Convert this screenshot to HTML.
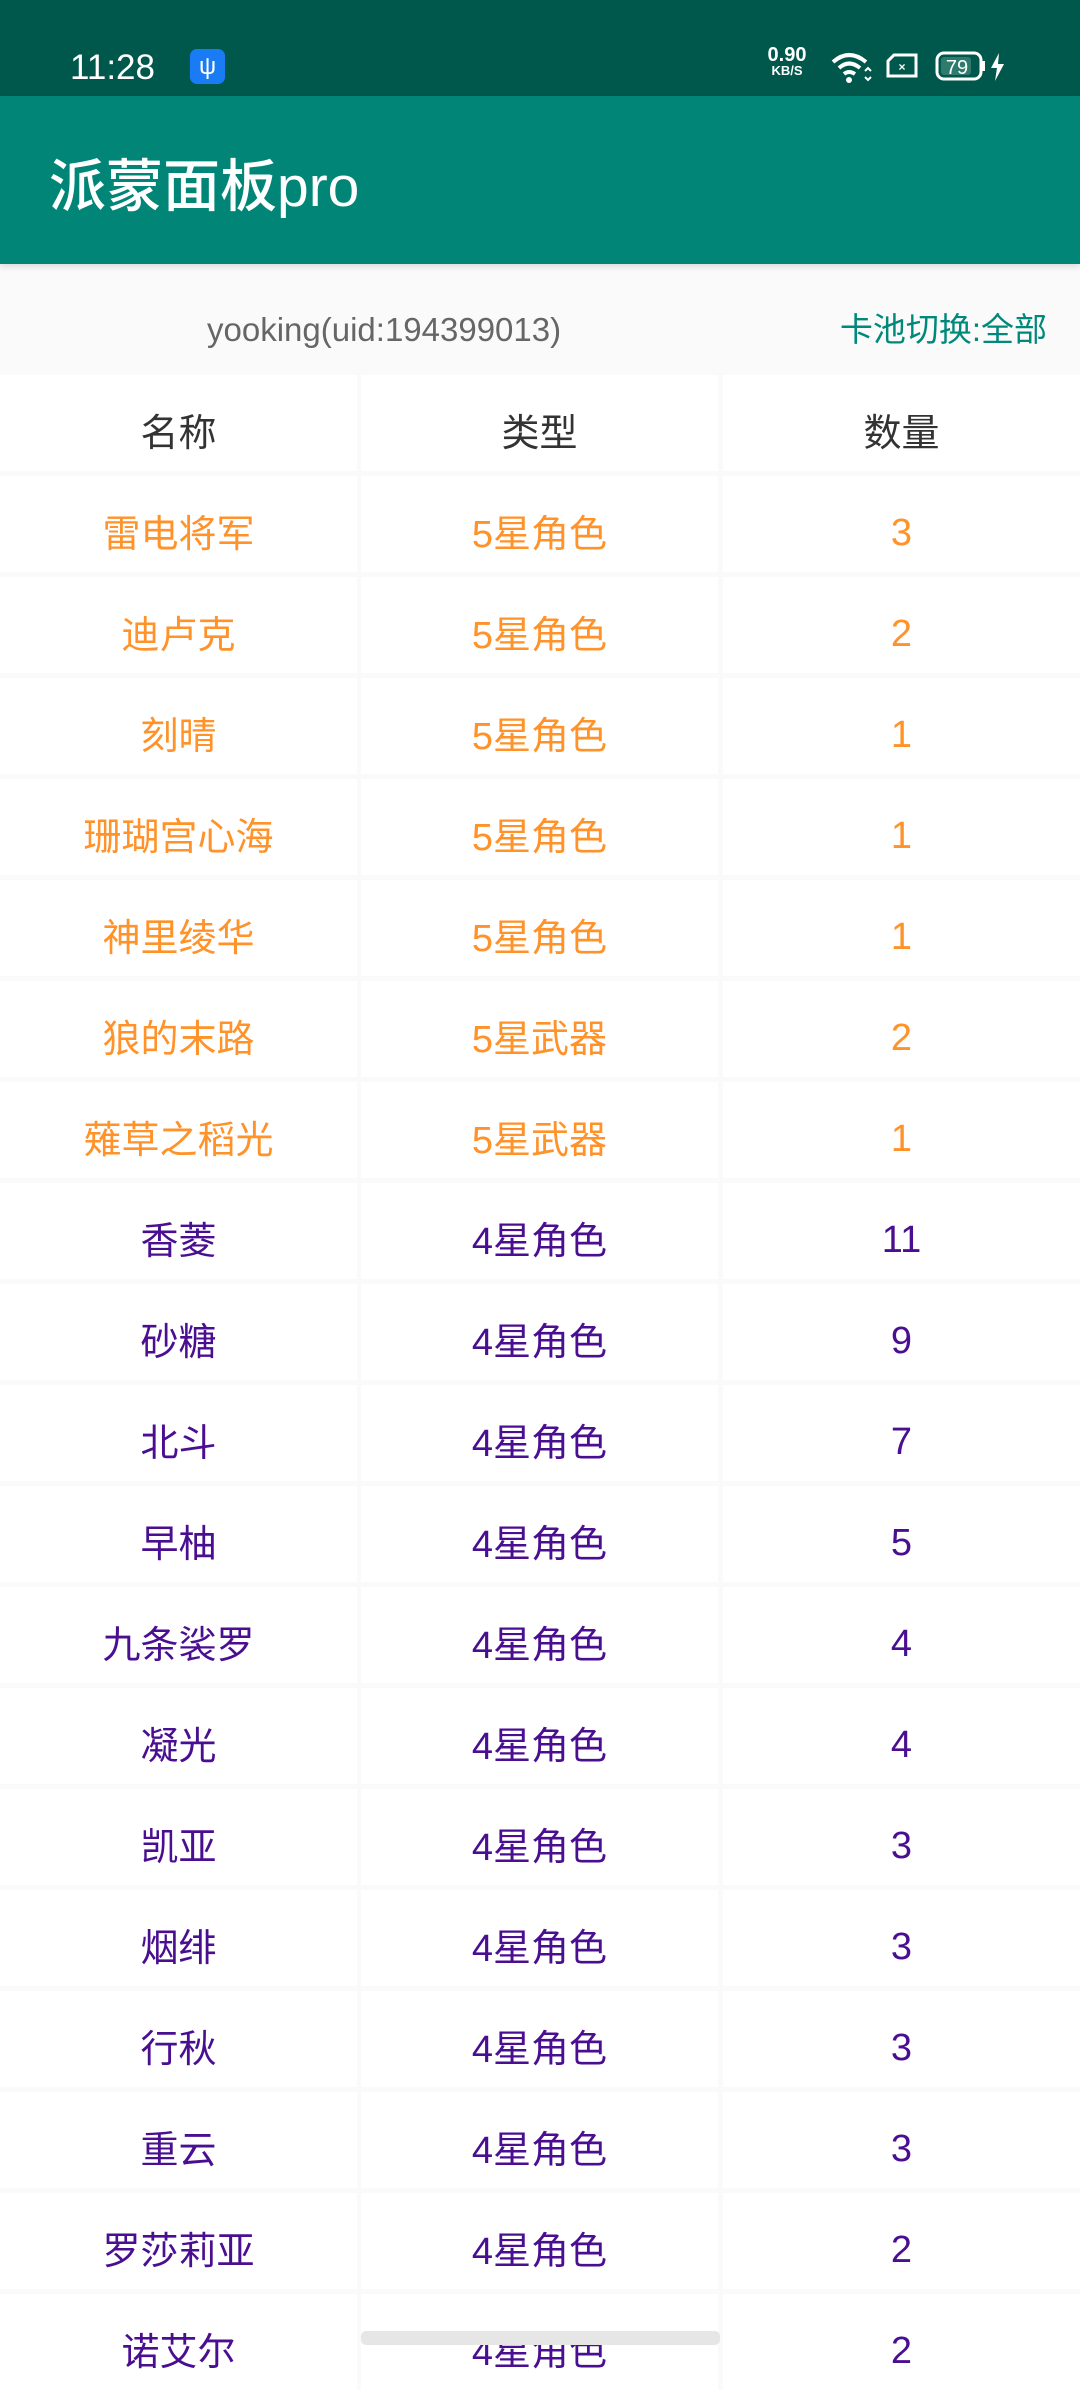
<!DOCTYPE html>
<html><head><meta charset="utf-8"><style>
*{margin:0;padding:0;box-sizing:border-box}
body{width:1080px;height:2340px;overflow:hidden;background:#fafafa;font-family:"Liberation Sans","Noto Sans CJK SC",sans-serif;position:relative}
.sb{position:absolute;left:0;top:0;width:1080px;height:96px;background:#00574B}
.ab{position:absolute;left:0;top:96px;width:1080px;height:168px;background:#008577;box-shadow:0 3px 6px rgba(0,0,0,.12)}
.row{position:absolute;left:0;width:1080px;height:96px}
.c{position:absolute;top:0;height:96px;background:#fff;display:flex;align-items:center;justify-content:center;font-size:38px;padding-top:12px}
.c1{left:0;width:357px}.c2{left:361px;width:357px}.c3{left:723px;width:357px;padding-top:18px}
.o{color:#FF9228}.p{color:#4A0E91}.h{color:#333}
</style></head><body>
<div class="sb">
<div style="position:absolute;left:70px;top:48px;color:#fff;font-size:35px;line-height:40px">11:28</div>
<div style="position:absolute;left:190px;top:49px;width:35px;height:35px;background:#1a7cf5;border-radius:7px;color:#fff;font-size:24px;text-align:center;line-height:35px">ψ</div>
<div style="position:absolute;left:760px;top:46px;width:54px;color:#fff;font-weight:bold;text-align:center"><div style="font-size:20px;line-height:18px">0.90</div><div style="font-size:13px;line-height:14px">KB/S</div></div>
<svg style="position:absolute;left:830px;top:50px" width="44" height="34" viewBox="0 0 44 34"><path d="M3 12 Q19 -2 36 12" stroke="#fff" stroke-width="4" fill="none"/><path d="M9 18 Q19 9 30 18" stroke="#fff" stroke-width="4" fill="none"/><path d="M14 24 Q19 20 25 24" stroke="#fff" stroke-width="4" fill="none"/><circle cx="19" cy="30" r="3" fill="#fff"/><path d="M35 21 l3-3 3 3 M35 27 l3 3 3-3" stroke="#fff" stroke-width="2" fill="none"/></svg>
<svg style="position:absolute;left:886px;top:53px" width="32" height="25" viewBox="0 0 32 25"><path d="M8 2 H30 V23 H2 V8 Z" stroke="#fff" stroke-width="3" fill="none"/><text x="16" y="18" fill="#fff" font-size="12" text-anchor="middle" font-weight="bold">×</text></svg>
<svg style="position:absolute;left:935px;top:51px" width="80" height="32" viewBox="0 0 80 32"><rect x="2" y="2" width="44" height="26" rx="7" stroke="#fff" stroke-width="3" fill="none"/><rect x="6" y="6" width="30" height="18" rx="3" fill="#2e7a6c"/><rect x="47" y="10" width="3" height="10" fill="#fff"/><text x="22" y="23" fill="#fff" font-size="20" text-anchor="middle" font-family="Liberation Sans">79</text><path d="M64 2 L56 17 H62 L60 30 L69 13 H63 Z" fill="#fff"/></svg>
</div>
<div class="ab"><div style="position:absolute;left:49px;top:58px;color:#fff;font-size:57px;line-height:66px;font-weight:500">派蒙面板pro</div></div>
<div style="position:absolute;left:207px;top:310px;color:#666;font-size:33px;line-height:40px">yooking(uid:194399013)</div>
<div style="position:absolute;right:33px;top:310px;color:#00897B;font-size:33px;line-height:40px">卡池切换:全部</div>
<div class="row" style="top:375px"><div class="c c1 h">名称</div><div class="c c2 h">类型</div><div class="c c3 h" style="padding-top:12px">数量</div></div>
<div class="row" style="top:476px"><div class="c c1 o">雷电将军</div><div class="c c2 o">5星角色</div><div class="c c3 o">3</div></div>
<div class="row" style="top:577px"><div class="c c1 o">迪卢克</div><div class="c c2 o">5星角色</div><div class="c c3 o">2</div></div>
<div class="row" style="top:678px"><div class="c c1 o">刻晴</div><div class="c c2 o">5星角色</div><div class="c c3 o">1</div></div>
<div class="row" style="top:779px"><div class="c c1 o">珊瑚宫心海</div><div class="c c2 o">5星角色</div><div class="c c3 o">1</div></div>
<div class="row" style="top:880px"><div class="c c1 o">神里绫华</div><div class="c c2 o">5星角色</div><div class="c c3 o">1</div></div>
<div class="row" style="top:981px"><div class="c c1 o">狼的末路</div><div class="c c2 o">5星武器</div><div class="c c3 o">2</div></div>
<div class="row" style="top:1082px"><div class="c c1 o">薙草之稻光</div><div class="c c2 o">5星武器</div><div class="c c3 o">1</div></div>
<div class="row" style="top:1183px"><div class="c c1 p">香菱</div><div class="c c2 p">4星角色</div><div class="c c3 p">11</div></div>
<div class="row" style="top:1284px"><div class="c c1 p">砂糖</div><div class="c c2 p">4星角色</div><div class="c c3 p">9</div></div>
<div class="row" style="top:1385px"><div class="c c1 p">北斗</div><div class="c c2 p">4星角色</div><div class="c c3 p">7</div></div>
<div class="row" style="top:1486px"><div class="c c1 p">早柚</div><div class="c c2 p">4星角色</div><div class="c c3 p">5</div></div>
<div class="row" style="top:1587px"><div class="c c1 p">九条裟罗</div><div class="c c2 p">4星角色</div><div class="c c3 p">4</div></div>
<div class="row" style="top:1688px"><div class="c c1 p">凝光</div><div class="c c2 p">4星角色</div><div class="c c3 p">4</div></div>
<div class="row" style="top:1789px"><div class="c c1 p">凯亚</div><div class="c c2 p">4星角色</div><div class="c c3 p">3</div></div>
<div class="row" style="top:1890px"><div class="c c1 p">烟绯</div><div class="c c2 p">4星角色</div><div class="c c3 p">3</div></div>
<div class="row" style="top:1991px"><div class="c c1 p">行秋</div><div class="c c2 p">4星角色</div><div class="c c3 p">3</div></div>
<div class="row" style="top:2092px"><div class="c c1 p">重云</div><div class="c c2 p">4星角色</div><div class="c c3 p">3</div></div>
<div class="row" style="top:2193px"><div class="c c1 p">罗莎莉亚</div><div class="c c2 p">4星角色</div><div class="c c3 p">2</div></div>
<div class="row" style="top:2294px"><div class="c c1 p">诺艾尔</div><div class="c c2 p">4星角色</div><div class="c c3 p">2</div></div>
<div style="position:absolute;left:361px;top:2331px;width:359px;height:14px;background:#e6e6e6;border-radius:5px"></div>
</body></html>
